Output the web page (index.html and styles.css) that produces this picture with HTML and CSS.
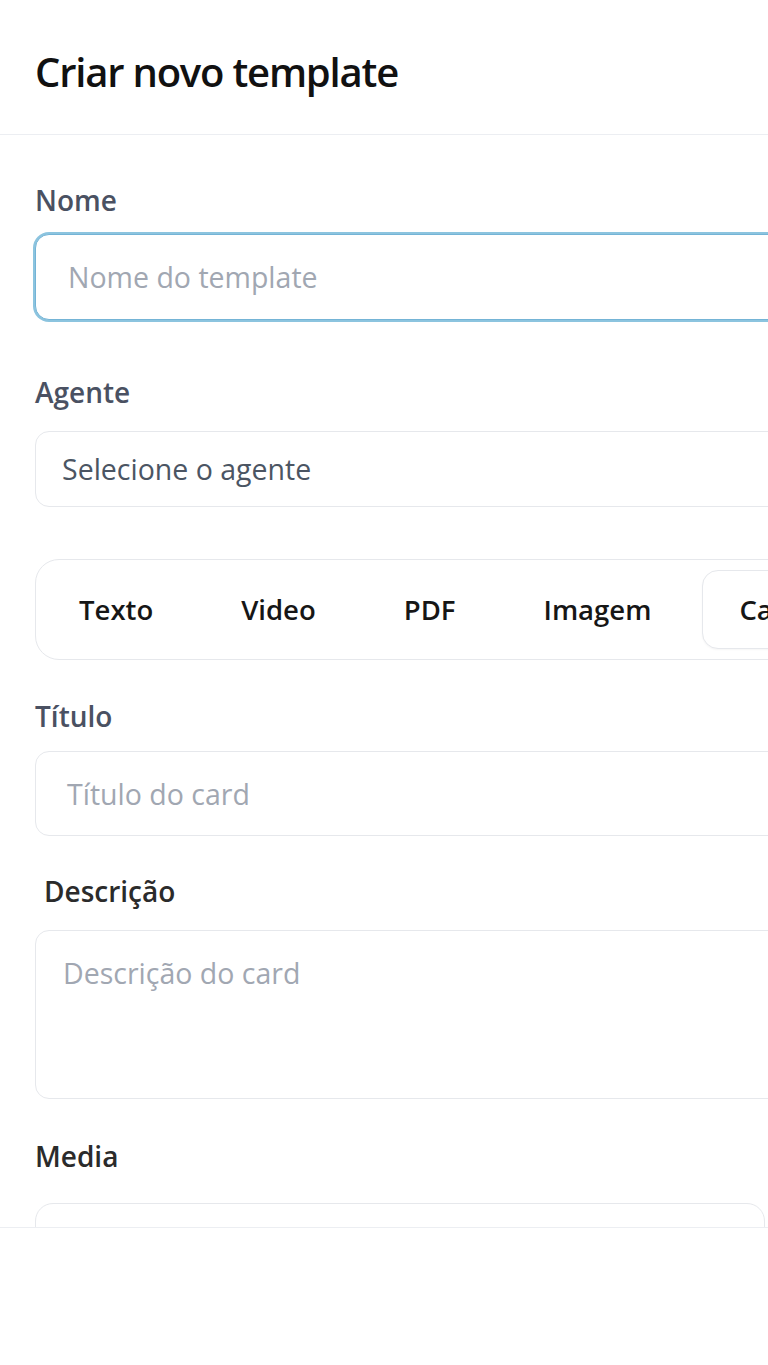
FILE: index.html
```html
<!DOCTYPE html>
<html lang="pt-BR">
<head>
<meta charset="utf-8">
<title>Criar novo template</title>
<link rel="stylesheet" href="styles.css">
</head>
<body>
<div class="modal">
  <header class="modal-header">
    <h2 class="modal-title">Criar novo template</h2>
  </header>
  <div class="modal-body">
    <div class="field field-nome">
      <label class="label">Nome</label>
      <div class="input input-focused"><span class="placeholder">Nome do template</span></div>
    </div>
    <div class="field field-agente">
      <label class="label">Agente</label>
      <div class="input select"><span class="select-value">Selecione o agente</span></div>
    </div>
    <div class="tabs">
      <div class="tab">Texto</div>
      <div class="tab">Video</div>
      <div class="tab">PDF</div>
      <div class="tab">Imagem</div>
      <div class="tab tab-active">Carrossel</div>
    </div>
    <div class="field field-titulo">
      <label class="label">Título</label>
      <div class="input input-titulo"><span class="placeholder">Título do card</span></div>
    </div>
    <div class="field field-desc">
      <label class="label label-dark label-indent">Descrição</label>
      <div class="input textarea"><span class="placeholder">Descrição do card</span></div>
    </div>
    <div class="field field-media">
      <label class="label label-dark">Media</label>
      <div class="media-box"></div>
    </div>
  </div>
  <footer class="modal-footer"></footer>
</div>
</body>
</html>
```

FILE: styles.css
```css
* { box-sizing: border-box; }
html, body {
  margin: 0;
  padding: 0;
  background: #ffffff;
  overflow: hidden;
  width: 768px;
  height: 1365px;
}
body {
  font-family: "Open Sans", "Noto Sans", sans-serif;
  color: #1f2937;
}
.modal {
  width: 880px;
  height: 1365px;
  display: flex;
  flex-direction: column;
  background: #fff;
}
.modal-header {
  height: 135px;
  padding: 48px 35px 0;
  border-bottom: 1.5px solid #eceef2;
  flex: none;
}
.modal-title {
  margin: 0;
  font-size: 40px;
  line-height: 48px;
  font-weight: 600;
  color: #111111;
  letter-spacing: -1.2px;
}
.modal-body {
  height: 1092px;
  flex: none;
  overflow: hidden;
  padding: 47px 0 0 35px;
}
.field { display: flex; flex-direction: column; }
.label {
  font-size: 28px;
  line-height: 36px;
  font-weight: 600;
  color: #4a5162;
}
.label-dark { color: #2b2b2b; }
.label-indent { padding-left: 9px; }
.input {
  border: 1.5px solid #e6e8ec;
  border-radius: 14px;
  background: #fff;
  display: flex;
  align-items: center;
  font-size: 28.5px;
  line-height: 36px;
}
.placeholder { color: #a1a7b2; }
.input-focused {
  margin-top: 16px;
  height: 86px;
  border: 1.5px solid #74b4d6;
  box-shadow: 0 0 0 2px #8cc4df;
  padding-left: 32px;
}
.field-agente { margin-top: 54px; }
.select {
  margin-top: 21px;
  height: 76px;
  padding-left: 26px;
}
.select-value { color: #4b5563; }
.tabs {
  margin-top: 52px;
  height: 101px;
  border: 1.5px solid #e6e8ec;
  border-radius: 24px;
  padding: 10px 6px;
  display: flex;
  gap: 14px;
  align-items: stretch;
  width: 900px;
}
.tab {
  padding: 0 36px;
  display: flex;
  align-items: center;
  font-size: 27.5px;
  font-weight: 600;
  color: #161616;
  border: 1.5px solid transparent;
  border-radius: 16px;
  white-space: nowrap;
}
.tab-active {
  background: #fff;
  border-color: #e6e8ec;
  box-shadow: 0 1px 2px rgba(0,0,0,0.04);
}
.field-titulo { margin-top: 38px; }
.input-titulo {
  margin-top: 17px;
  height: 85px;
  padding-left: 31px;
}
.field-desc { margin-top: 37px; }
.textarea {
  margin-top: 21px;
  height: 169px;
  align-items: flex-start;
  padding: 24px 0 0 27px;
}
.field-media { margin-top: 39px; }
.media-box {
  margin-top: 29px;
  width: 730px;
  height: 120px;
  border: 1.5px solid #e6e8ec;
  border-radius: 18px;
}
.modal-footer {
  flex: 1;
  border-top: 1.5px solid #eceef2;
  background: #ffffff;
}
```
